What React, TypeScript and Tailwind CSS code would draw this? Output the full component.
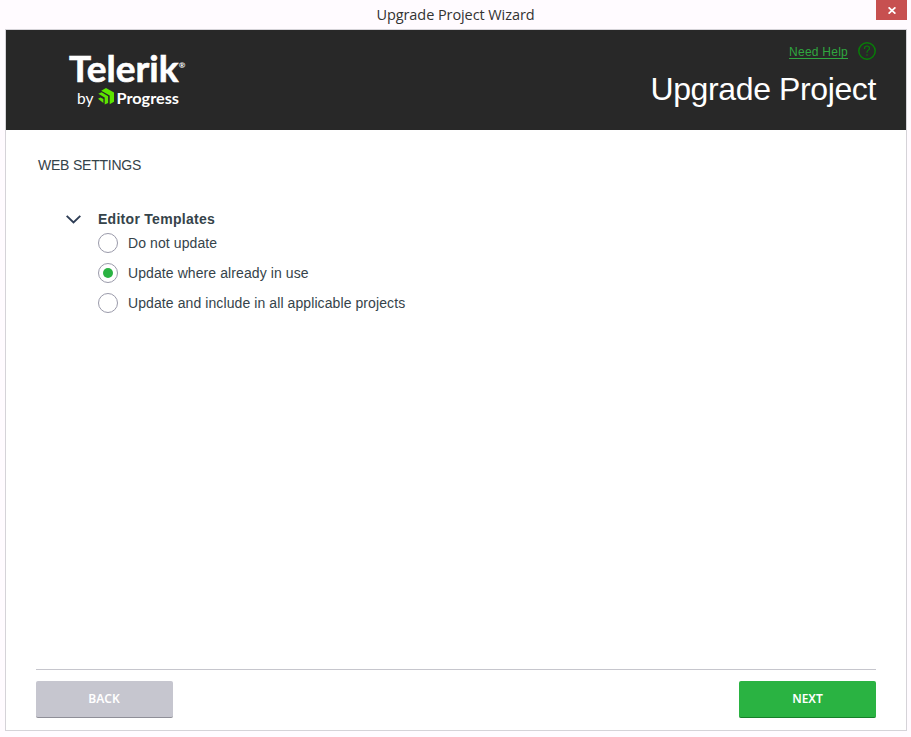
import React from "react";

function Logo() {
  return (
    <svg width="135" height="75" viewBox="0 0 135 75" fill="#fff" fontFamily="Lato, 'Open Sans', sans-serif">
      <text x="9" y="37" fontSize="35.500" fontWeight="700" stroke="#fff" strokeWidth="0.600" textLength="109.500" lengthAdjust="spacingAndGlyphs">Telerik</text>
      <text x="118.800" y="22.500" fontSize="8" fontWeight="700">®</text>
      <text x="17" y="58.500" fontSize="15.500" textLength="16.500" lengthAdjust="spacingAndGlyphs">by</text>
      <g fill="#5ce500" transform="translate(38 43)">
        <path d="M3.200 2.700 8 0l8 4.500v9.300L11.700 16.200V7.400z" />
        <path d="M.3 5.700 3.600 4.300l6.500 3.900v6.900L6.700 16.600V9.600z" />
        <path d="M0 10.800 2.500 9.400 5.400 11.100V15z" />
      </g>
      <text x="56.500" y="58.500" fontSize="15.500" fontWeight="700" textLength="62.500" lengthAdjust="spacingAndGlyphs">Progress</text>
    </svg>
  );
}

function Option({ label, checked }: { label: string; checked?: boolean }) {
  return (
    <div role="radio" aria-checked={!!checked} className="flex h-[30px] items-center">
      <span className="flex size-5 items-center justify-center rounded-full border border-[#9a9aaa]">
        {checked && <span className="size-[10px] rounded-full bg-[#2ab342]" />}
      </span>
      <span className="ml-[10px] text-[14px] leading-5 tracking-[0.09px]">{label}</span>
    </div>
  );
}

export default function App() {
  return (
    <div className="flex h-[737px] w-[911px] flex-col bg-[#fffbff] font-['Liberation_Sans',Arial,sans-serif] text-[#35434a]">
      <div className="flex h-[29px] shrink-0">
        <div className="ml-[35px] flex-1 pt-[5px] text-center font-['Open_Sans',sans-serif] text-[14.500px] leading-5 tracking-[-0.08px] text-[#333]">
          Upgrade Project Wizard
        </div>
        <button className="mr-1 flex h-5 w-[31px] items-center justify-center bg-[#c75050]" aria-label="Close">
          <svg className="mt-px ml-px" width="8" height="7" viewBox="0 0 8 7" stroke="#fff" strokeWidth="1.700"><path d="M.6.300 7.400 6.700M7.400.300.6 6.700" /></svg>
        </button>
      </div>
      <main className="ml-[5px] flex h-[702px] w-[902px] flex-col border border-[#d5d3d8] bg-white">
        <header className="flex h-[100px] shrink-0 justify-between bg-[#282828] pr-[30px]">
          <div className="pt-[15px] pl-[54px]"><Logo /></div>
          <div className="flex flex-col items-end pt-3">
            <div className="flex h-[18px] items-start gap-[10px]">
              <a className="pt-[2px] text-[12px] leading-[16px] tracking-[0.25px] text-[#2fa63f] underline underline-offset-2">Need Help</a>
              <svg width="18" height="18" viewBox="0 0 18 18" fill="none" stroke="#087d08" strokeWidth="1.500">
                <circle cx="9" cy="9" r="8.200" />
                <path d="M6.500 6.900V6.300a2.500 2.300 0 0 1 5 0c0 1.800-2.500 1.900-2.500 3.900v.6M9 12.200v1.500" strokeWidth="1.200" />
              </svg>
            </div>
            <h1 className="mt-[11px] text-[32px] leading-9 tracking-[-0.38px] text-white">Upgrade Project</h1>
          </div>
        </header>
        <section className="flex-1 pl-8">
          <h2 className="mt-[25px] text-[14px] leading-5 tracking-[-0.22px]">WEB SETTINGS</h2>
          <div className="mt-[34px] flex pl-7">
            <svg className="mt-[6px] shrink-0" width="15" height="9" viewBox="0 0 15 9" fill="none" stroke="#2e3d55" strokeWidth="1.900"><path d="M.7.900 7.500 7.500 14.300.900" /></svg>
            <div className="ml-[17px]">
              <h3 className="text-[14px] leading-5 font-bold tracking-[0.28px]">Editor Templates</h3>
              <div role="radiogroup" className="-mt-[1px]">
                <Option label="Do not update" />
                <Option label="Update where already in use" checked />
                <Option label="Update and include in all applicable projects" />
              </div>
            </div>
          </div>
        </section>
        <footer className="mx-[30px] flex h-[61px] shrink-0 justify-between border-t border-[#c6c6cd] pt-[11px] font-['Noto_Sans',sans-serif] text-[12px] font-semibold text-white">
          <button className="h-[37px] w-[137px] rounded-[2px] border-b border-[#8f8f98] bg-[#c6c6cf] pr-px tracking-[0.1px]">BACK</button>
          <button className="h-[37px] w-[137px] rounded-[2px] border-b border-[#168029] bg-[#2ab342]">NEXT</button>
        </footer>
      </main>
    </div>
  );
}
